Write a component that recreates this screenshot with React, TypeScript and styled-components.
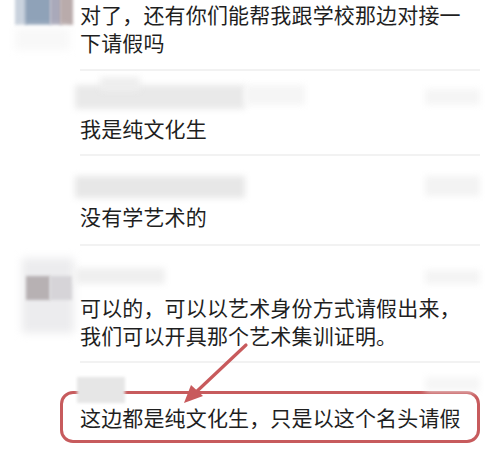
import React from "react";
import styled, { createGlobalStyle } from "styled-components";

const Global = createGlobalStyle`
  html, body { margin: 0; padding: 0; background: #ffffff; }
  body { width: 500px; height: 452px; overflow: hidden; }
`;

const Page = styled.div`
  position: relative;
  width: 500px;
  height: 452px;
  overflow: hidden;
  background: #fff;
  font-family: "Noto Sans CJK SC", "Noto Sans", sans-serif;
  color: #1f1f1f;
`;

const Row = styled.div<{ $top: number }>`
  display: grid;
  grid-template-columns: 80px 1fr;
  padding-top: ${(p) => p.$top}px;
`;

const AvatarCol = styled.div`
  position: relative;
`;

const Content = styled.div<{ $bottom: number }>`
  display: flex;
  flex-direction: column;
  padding-bottom: ${(p) => p.$bottom}px;
  width: 400px;
`;

const NameBar = styled.div<{ $h: number; $gap: number }>`
  position: relative;
  height: ${(p) => p.$h}px;
  margin-bottom: ${(p) => p.$gap}px;
`;

const Blur = styled.div<{ $x: number; $y: number; $w: number; $h: number; $c: string; $r?: number }>`
  position: absolute;
  left: ${(p) => p.$x}px;
  top: ${(p) => p.$y}px;
  width: ${(p) => p.$w}px;
  height: ${(p) => p.$h}px;
  background: ${(p) => p.$c};
  filter: blur(${(p) => p.$r ?? 2}px);
`;

const Text = styled.div`
  font-size: 21px;
  line-height: 28px;
  max-width: 392px;
  letter-spacing: 0.15px;
`;

const Divider = styled.div`
  height: 2px;
  background: #f2f2f2;
  width: 400px;
`;

const Boxed = styled.div`
  margin-left: -20px;
  width: 420px;
  box-sizing: border-box;
  border: 3px solid #c75b5d;
  border-radius: 13px;
  padding: 9px 0 9px 17px;
  font-size: 21px;
  line-height: 28px;
  letter-spacing: 0.15px;
`;

const Arrow = styled.svg`
  position: absolute;
  left: 170px;
  top: 330px;
  pointer-events: none;
`;

export default function App() {
  return (
    <Page>
      <Global />
      <Row $top={0}>
        <AvatarCol>
          <Blur $x={15} $y={-5} $w={12} $h={30} $c="#c9d2dd" $r={1.5} />
          <Blur $x={25} $y={-5} $w={26} $h={30} $c="#8fa2b8" $r={1.5} />
          <Blur $x={50} $y={-5} $w={12} $h={30} $c="#a9a9ba" $r={1.5} />
          <Blur $x={60} $y={-5} $w={13} $h={30} $c="#b9abab" $r={1.5} />
          <Blur $x={15} $y={28} $w={55} $h={22} $c="#f8f8f8" $r={4} />
        </AvatarCol>
        <Content $bottom={13}>
          <Text>对了，还有你们能帮我跟学校那边对接一下请假吗</Text>
        </Content>
      </Row>
      <Row $top={0}>
        <div />
        <Divider />
      </Row>
      <Row $top={0}>
        <AvatarCol />
        <Content $bottom={12}>
          <NameBar $h={38} $gap={5}>
            <Blur $x={-5} $y={14} $w={170} $h={24} $c="#e9e9e9" $r={3} />
            <Blur $x={20} $y={6} $w={40} $h={14} $c="#eeeeee" $r={3} />
            <Blur $x={165} $y={14} $w={60} $h={20} $c="#f5f5f5" $r={3} />
            <Blur $x={345} $y={18} $w={55} $h={16} $c="#f5f5f5" $r={3} />
          </NameBar>
          <Text>我是纯文化生</Text>
        </Content>
      </Row>
      <Row $top={0}>
        <div />
        <Divider />
      </Row>
      <Row $top={0}>
        <AvatarCol />
        <Content $bottom={14}>
          <NameBar $h={42} $gap={4}>
            <Blur $x={-5} $y={20} $w={170} $h={22} $c="#e7e7e7" $r={3} />
            <Blur $x={345} $y={20} $w={55} $h={20} $c="#f3f3f3" $r={3} />
          </NameBar>
          <Text>没有学艺术的</Text>
        </Content>
      </Row>
      <Row $top={0}>
        <div />
        <Divider />
      </Row>
      <Row $top={0}>
        <AvatarCol>
          <Blur $x={22} $y={12} $w={52} $h={75} $c="#ececee" $r={4} />
          <Blur $x={26} $y={30} $w={24} $h={24} $c="#b7b1b3" $r={1.5} />
          <Blur $x={50} $y={30} $w={22} $h={24} $c="#d6d4d8" $r={1.5} />
        </AvatarCol>
        <Content $bottom={12}>
          <NameBar $h={42} $gap={5}>
            <Blur $x={-5} $y={22} $w={90} $h={16} $c="#efefef" $r={3} />
            <Blur $x={345} $y={24} $w={55} $h={14} $c="#f4f4f4" $r={3} />
          </NameBar>
          <Text>可以的，可以以艺术身份方式请假出来，我们可以开具那个艺术集训证明。</Text>
        </Content>
      </Row>
      <Row $top={0}>
        <div />
        <Divider />
      </Row>
      <Row $top={0}>
        <AvatarCol />
        <Content $bottom={0}>
          <NameBar $h={28} $gap={0}>
            <Blur $x={-3} $y={14} $w={48} $h={26} $c="#e6e6e6" $r={1.5} />
            <Blur $x={345} $y={14} $w={55} $h={14} $c="#f6f6f6" $r={3} />
          </NameBar>
          <Boxed>这边都是纯文化生，只是以这个名头请假</Boxed>
        </Content>
      </Row>
      <Arrow width="90" height="80" viewBox="0 0 90 80">
        <line x1="76" y1="15" x2="24" y2="64" stroke="#c85a5c" strokeWidth="3.2" strokeLinecap="round" />
        <polygon points="14,73 21,55 33,66" fill="#c85a5c" />
      </Arrow>
    </Page>
  );
}
